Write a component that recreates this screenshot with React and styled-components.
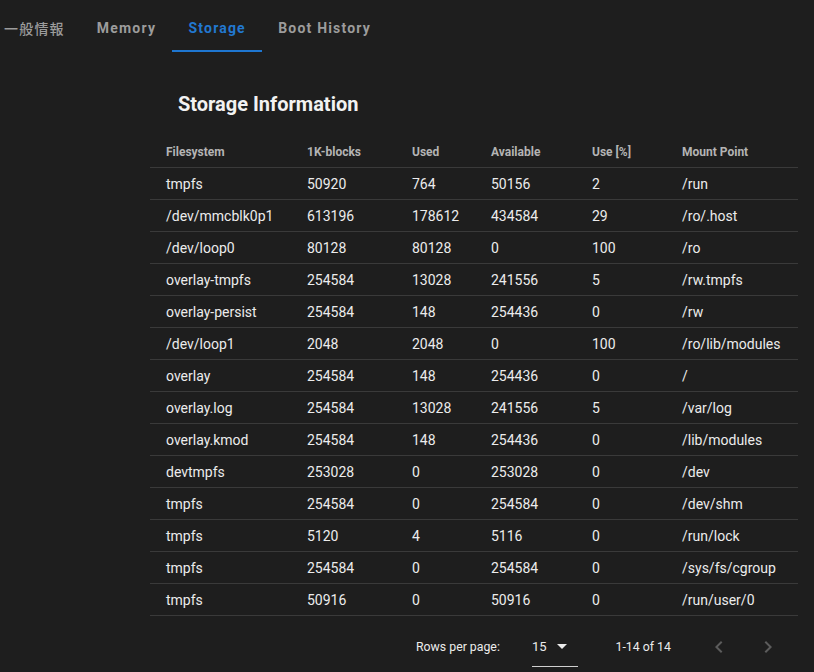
import styled, { createGlobalStyle } from "styled-components";

const rows = [
  ["tmpfs", "50920", "764", "50156", "2", "/run"],
  ["/dev/mmcblk0p1", "613196", "178612", "434584", "29", "/ro/.host"],
  ["/dev/loop0", "80128", "80128", "0", "100", "/ro"],
  ["overlay-tmpfs", "254584", "13028", "241556", "5", "/rw.tmpfs"],
  ["overlay-persist", "254584", "148", "254436", "0", "/rw"],
  ["/dev/loop1", "2048", "2048", "0", "100", "/ro/lib/modules"],
  ["overlay", "254584", "148", "254436", "0", "/"],
  ["overlay.log", "254584", "13028", "241556", "5", "/var/log"],
  ["overlay.kmod", "254584", "148", "254436", "0", "/lib/modules"],
  ["devtmpfs", "253028", "0", "253028", "0", "/dev"],
  ["tmpfs", "254584", "0", "254584", "0", "/dev/shm"],
  ["tmpfs", "5120", "4", "5116", "0", "/run/lock"],
  ["tmpfs", "254584", "0", "254584", "0", "/sys/fs/cgroup"],
  ["tmpfs", "50916", "0", "50916", "0", "/run/user/0"],
];

const columns = [
  { label: "Filesystem", width: 141 },
  { label: "1K-blocks", width: 105 },
  { label: "Used", width: 79 },
  { label: "Available", width: 101 },
  { label: "Use [%]", width: 90 },
  { label: "Mount Point", width: 132 },
];

const tabs = ["一般情報", "Memory", "Storage", "Boot History"];

const App = () => {
  return (
    <>
      <GlobalStyle />
      <Page>
        <TabBar>
          {tabs.map((t) => (
            <Tab key={t} active={t === "Storage"} cjk={t === "一般情報"}>
              {t}
            </Tab>
          ))}
        </TabBar>
        <Content>
          <Title>Storage Information</Title>
          <Table>
            <colgroup>
              {columns.map((c) => (
                <col key={c.label} style={{ width: c.width }} />
              ))}
            </colgroup>
            <thead>
              <tr>
                {columns.map((c) => (
                  <Th key={c.label}>{c.label}</Th>
                ))}
              </tr>
            </thead>
            <tbody>
              {rows.map((r, i) => (
                <tr key={i}>
                  {r.map((v, j) => (
                    <Td key={j}>{v}</Td>
                  ))}
                </tr>
              ))}
            </tbody>
          </Table>
          <Pagination>
            <PageLabel>Rows per page:</PageLabel>
            <Select>
              <span>15</span>
              <svg width="10" height="5" viewBox="0 0 10 5">
                <path d="M0 0 L10 0 L5 5 Z" fill="#ececec" />
              </svg>
            </Select>
            <PageCount>1-14 of 14</PageCount>
            <NavButton>
              <svg width="24" height="24" viewBox="0 0 24 24">
                <path d="M15.41 7.41 14 6l-6 6 6 6 1.41-1.41L10.83 12z" fill="#5c5c5c" />
              </svg>
            </NavButton>
            <NavButton>
              <svg width="24" height="24" viewBox="0 0 24 24">
                <path d="M10 6 8.59 7.41 13.17 12l-4.58 4.59L10 18l6-6z" fill="#5c5c5c" />
              </svg>
            </NavButton>
          </Pagination>
        </Content>
      </Page>
    </>
  );
};

export default App;

const GlobalStyle = createGlobalStyle`
  html, body {
    margin: 0;
    padding: 0;
    background: #1e1e1e;
    font-family: Roboto, "Noto Sans CJK JP", sans-serif;
  }
`;

const Page = styled.div`
  width: 814px;
  height: 672px;
  background: #1e1e1e;
  overflow: hidden;
`;

const TabBar = styled.div`
  display: flex;
  margin-top: 4px;
  margin-left: -12px;
  height: 48px;
`;

const Tab = styled.div`
  min-width: 90px;
  box-sizing: border-box;
  padding: 2px 16px 0;
  display: flex;
  align-items: center;
  justify-content: center;
  font-size: 14px;
  font-weight: ${(p) => (p.cjk ? 500 : 700)};
  letter-spacing: ${(p) => (p.cjk ? "1.2px" : "1.2px")};
  color: ${(p) => (p.active ? "#2278d0" : "#9c9c9c")};
  border-bottom: 2px solid ${(p) => (p.active ? "#1e76d0" : "transparent")};
  margin-bottom: -2px;
  height: 48px;
  font-family: Roboto, "Noto Sans CJK JP", sans-serif;
`;

const Content = styled.div`
  margin-left: 150px;
  width: 648px;
`;

const Title = styled.h2`
  margin: 36px 0 0 28px;
  height: 32px;
  line-height: 32px;
  font-size: 20px;
  font-weight: 700;
  color: #f2f2f2;
`;

const Table = styled.table`
  margin-top: 16px;
  width: 648px;
  border-collapse: collapse;
  table-layout: fixed;
`;

const Th = styled.th`
  text-align: left;
  height: 31px;
  padding: 0 0 0 16px;
  font-size: 12px;
  font-weight: 700;
  color: #b4b4b4;
  border-bottom: 1px solid #3a3a3a;
  white-space: nowrap;
`;

const Td = styled.td`
  height: 31px;
  padding: 0 0 0 16px;
  font-size: 14px;
  color: #ececec;
  border-bottom: 1px solid #3a3a3a;
  white-space: nowrap;
`;

const Pagination = styled.div`
  display: flex;
  align-items: center;
  height: 56px;
  margin-top: 3px;
  padding-left: 266px;
  font-size: 12.3px;
  color: #ececec;
`;

const PageLabel = styled.span`
  width: 117px;
`;

const Select = styled.div`
  width: 46px;
  height: 32px;
  box-sizing: border-box;
  display: flex;
  align-items: center;
  justify-content: space-between;
  padding-right: 11px;
  border-bottom: 1px solid #d0d0d0;
  margin-top: 8px;
  padding-bottom: 8px;
  font-size: 13px;
`;

const PageCount = styled.span`
  margin-left: 38px;
  width: 84px;
`;

const NavButton = styled.div`
  width: 40px;
  height: 40px;
  display: flex;
  align-items: center;
  justify-content: center;
  margin-right: 10px;
`;
